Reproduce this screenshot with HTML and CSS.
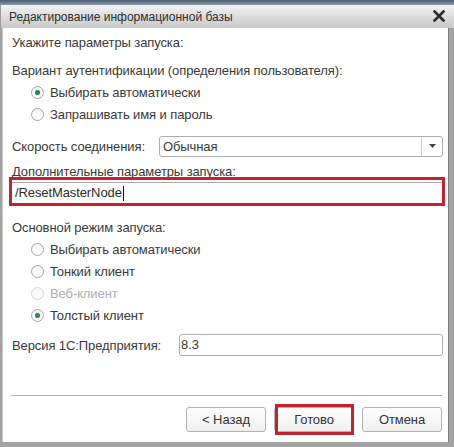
FILE: index.html
```html
<!DOCTYPE html>
<html lang="ru">
<head>
<meta charset="utf-8">
<link rel="stylesheet" href="styles.css">
</head>
<body>
<div class="window">
  <div class="topstrip"></div>
  <div class="titlebar">
    <span class="title">Редактирование информационной базы</span>
    <svg class="close" width="12" height="12" viewBox="0 0 12 12"><path d="M1.5 1.5 L10.5 10.5 M10.5 1.5 L1.5 10.5" stroke="#2a2a2a" stroke-width="2.6" stroke-linecap="square"/></svg>
  </div>
  <div class="frame">
    <div class="content">
      <div class="row heading">Укажите параметры запуска:</div>
      <div class="row label-auth">Вариант аутентификации (определения пользователя):</div>
      <div class="radio"><span class="dot on"></span>Выбирать автоматически</div>
      <div class="radio"><span class="dot"></span>Запрашивать имя и пароль</div>
      <div class="field speed">
        <span class="flabel">Скорость соединения:</span>
        <div class="combo"><span class="cval">Обычная</span><span class="cbtn"><svg width="7" height="4" viewBox="0 0 7 4"><path d="M0 0 H7 L3.5 4 Z" fill="#444"/></svg></span></div>
      </div>
      <div class="row label-extra">Дополнительные параметры запуска:</div>
      <div class="extra">
        <div class="textbox">/ResetMasterNode<span class="caret"></span></div>
        <div class="highlight"></div>
      </div>
      <div class="row label-mode">Основной режим запуска:</div>
      <div class="radio"><span class="dot"></span>Выбирать автоматически</div>
      <div class="radio"><span class="dot"></span>Тонкий клиент</div>
      <div class="radio disabled"><span class="dot"></span>Веб-клиент</div>
      <div class="radio"><span class="dot on"></span>Толстый клиент</div>
      <div class="field version">
        <span class="flabel">Версия 1С:Предприятия:</span>
        <div class="vinput">8.3</div>
      </div>
    </div>
    <div class="footer">
      <div class="sep"></div>
      <div class="buttons">
        <div class="btn">&lt; Назад</div>
        <div class="btn primary">Готово<div class="btn-highlight"></div></div>
        <div class="btn">Отмена</div>
      </div>
    </div>
  </div>
</div>
</body>
</html>
```

FILE: styles.css
```css
html, body {
  margin: 0;
  padding: 0;
  background: #9a9a9a;
}
.window {
  width: 454px;
  height: 447px;
  display: flex;
  flex-direction: column;
  font-family: "Liberation Sans", Arial, sans-serif;
  color: #3a3a3a;
  font-size: 13px;
  letter-spacing: -0.1px;
  overflow: hidden;
  background: #a3a3a3;
}
.topstrip {
  height: 5px;
  background: linear-gradient(#4e5b6d, #8f9aa8);
}
.titlebar {
  height: 23px;
  display: flex;
  align-items: center;
  justify-content: space-between;
  padding: 0 9px 0 8px;
  background: linear-gradient(#f2f2f2, #d9d9d9 60%, #c9c9c9);
  border-left: 1px solid #9c9c9c;
}
.title {
  font-size: 12px;
  letter-spacing: 0;
  color: #2e2e2e;
}
.close {
  display: block;
  margin-top: -2px;
}
.frame {
  flex: 1;
  margin: 0 6px 5px 3px;
  background: #fff;
  display: flex;
  flex-direction: column;
  box-shadow: 1px 0 0 #7c7c7c, -1px 0 0 #c8c8c8;
}
.content {
  flex: 1;
  padding: 4px 0 0 9px;
  display: flex;
  flex-direction: column;
}
.row {
  height: 22px;
  line-height: 22px;
  white-space: nowrap;
}
.label-auth {
  margin-top: 6px;
  height: 21px;
  line-height: 21px;
}
.radio {
  height: 22px;
  display: flex;
  align-items: center;
  padding-left: 19px;
  white-space: nowrap;
}
.radio.disabled {
  color: #b0b0b0;
}
.dot {
  width: 11px;
  height: 11px;
  border: 1px solid #a6a6a6;
  border-radius: 50%;
  background: linear-gradient(#f4f4f4, #ffffff);
  margin-right: 6px;
  position: relative;
  flex: none;
}
.radio.disabled .dot {
  border-color: #d8d8d8;
}
.dot.on::after {
  content: "";
  position: absolute;
  left: 3px;
  top: 3px;
  width: 5px;
  height: 5px;
  border-radius: 50%;
  background: #2f8a4e;
  box-shadow: 0 0 1px #6fbf8c;
}
.field {
  display: flex;
  align-items: center;
  padding-right: 5px;
}
.flabel {
  white-space: nowrap;
}
.speed {
  margin-top: 10px;
  height: 22px;
}
.speed .flabel {
  width: 147px;
  flex: none;
}
.combo {
  flex: 1;
  height: 19px;
  border: 1px solid #acacac;
  border-radius: 3px;
  display: flex;
  align-items: center;
  background: #fff;
}
.cval {
  flex: 1;
  padding-left: 3px;
}
.cbtn {
  width: 20px;
  height: 19px;
  border-left: 1px solid #cfcfcf;
  display: flex;
  align-items: center;
  justify-content: center;
}
.label-extra {
  margin-top: 5px;
  height: 20px;
  line-height: 20px;
}
.extra {
  position: relative;
  margin-top: 0;
  margin-right: 5px;
}
.textbox {
  height: 20px;
  line-height: 20px;
  border-top: 1px solid #a8a8a8;
  padding-left: 3px;
  display: flex;
  align-items: center;
  color: #2a2a2a;
}
.caret {
  display: inline-block;
  width: 1px;
  height: 15px;
  background: #111;
  margin-left: 1px;
}
.highlight {
  position: absolute;
  left: -3px;
  right: -2px;
  top: -5px;
  bottom: -3px;
  border: 3px solid #c5222f;
}
.label-mode {
  margin-top: 15px;
  height: 20px;
  line-height: 20px;
}
.version {
  margin-top: 8px;
  height: 22px;
}
.version .flabel {
  width: 167px;
  flex: none;
}
.vinput {
  flex: 1;
  height: 20px;
  line-height: 20px;
  border: 1px solid #acacac;
  border-radius: 3px;
  padding-left: 1px;
}
.footer {
  padding: 0 6px 10px 8px;
}
.sep {
  height: 1px;
  background: #b4b4b4;
}
.buttons {
  margin-top: 11px;
  display: flex;
  justify-content: flex-end;
  gap: 8px;
}
.btn {
  position: relative;
  width: 78px;
  height: 23px;
  line-height: 23px;
  text-align: center;
  border: 1px solid #b3b3b3;
  border-radius: 3px;
  background: linear-gradient(#ffffff, #f0f0f0);
  color: #333;
}
.btn-highlight {
  position: absolute;
  left: 0;
  right: -1px;
  top: -4px;
  bottom: -4px;
  border: 3px solid #c5222f;
}
```
